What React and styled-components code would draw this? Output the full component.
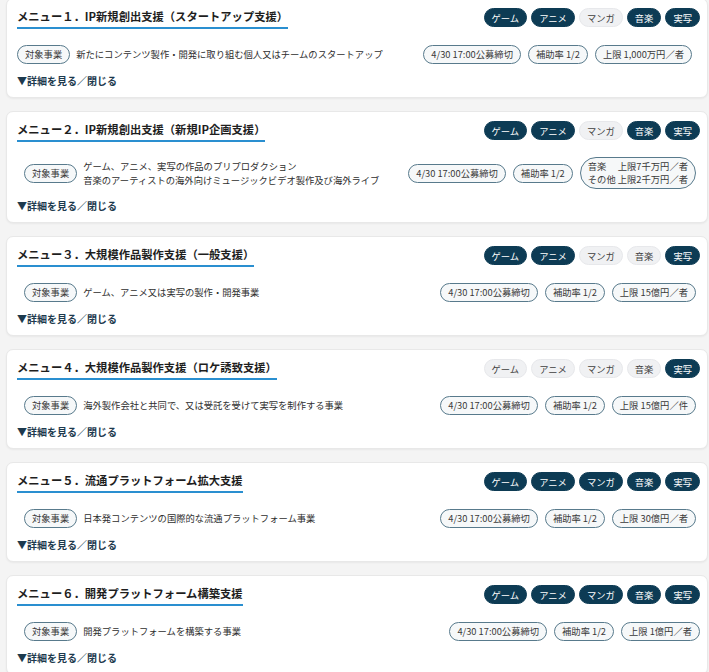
import React from "react";
import styled, { createGlobalStyle } from "styled-components";

const GlobalStyle = createGlobalStyle`
  body {
    margin: 0;
    background: #f4f4f4;
    font-family: "Noto Sans CJK JP", "Noto Sans", sans-serif;
    color: #333;
  }
`;

const GENRES = ["ゲーム", "アニメ", "マンガ", "音楽", "実写"];

const menus = [
  {
    title: "メニュー１．IP新規創出支援（スタートアップ支援）",
    genres: [1, 1, 0, 1, 1],
    desc: ["新たにコンテンツ製作・開発に取り組む個人又はチームのスタートアップ"],
    limit: ["上限 1,000万円／者"],
    indent: 0,
    trail: 8,
  },
  {
    title: "メニュー２．IP新規創出支援（新規IP企画支援）",
    genres: [1, 1, 0, 1, 1],
    desc: [
      "ゲーム、アニメ、実写の作品のプリプロダクション",
      "音楽のアーティストの海外向けミュージックビデオ製作及び海外ライブ",
    ],
    limit: ["音楽　 上限7千万円／者", "その他 上限2千万円／者"],
    indent: 7,
    trail: 4,
  },
  {
    title: "メニュー３．大規模作品製作支援（一般支援）",
    genres: [1, 1, 0, 0, 1],
    desc: ["ゲーム、アニメ又は実写の製作・開発事業"],
    limit: ["上限 15億円／者"],
    indent: 7,
    trail: 4,
  },
  {
    title: "メニュー４．大規模作品製作支援（ロケ誘致支援）",
    genres: [0, 0, 0, 0, 1],
    desc: ["海外製作会社と共同で、又は受託を受けて実写を制作する事業"],
    limit: ["上限 15億円／件"],
    indent: 7,
    trail: 4,
  },
  {
    title: "メニュー５．流通プラットフォーム拡大支援",
    genres: [1, 1, 1, 1, 1],
    desc: ["日本発コンテンツの国際的な流通プラットフォーム事業"],
    limit: ["上限 30億円／者"],
    indent: 7,
    trail: 4,
  },
  {
    title: "メニュー６．開発プラットフォーム構築支援",
    genres: [1, 1, 1, 1, 1],
    desc: ["開発プラットフォームを構築する事業"],
    limit: ["上限 1億円／者"],
    indent: 7,
    trail: 0,
  },
];

const App = () => {
  return (
    <>
      <GlobalStyle />
      <ListStyle>
        {menus.map((m) => (
          <CardStyle key={m.title}>
            <HeaderStyle>
              <TitleStyle>{m.title}</TitleStyle>
              <TagsStyle>
                {GENRES.map((g, i) => (
                  <Tag key={g} $active={!!m.genres[i]}>
                    {g}
                  </Tag>
                ))}
              </TagsStyle>
            </HeaderStyle>

            <RowStyle $indent={m.indent} $trail={m.trail}>
              <LeadStyle>
                <Pill>対象事業</Pill>
                <DescStyle>
                  {m.desc.map((d) => (
                    <div key={d}>{d}</div>
                  ))}
                </DescStyle>
              </LeadStyle>
              <InfoStyle>
                <Pill>4/30 17:00公募締切</Pill>
                <Pill>補助率 1/2</Pill>
                <Pill $multi={m.limit.length > 1}>
                  {m.limit.map((l) => (
                    <div key={l}>{l}</div>
                  ))}
                </Pill>
              </InfoStyle>
            </RowStyle>

            <ToggleStyle>▼詳細を見る／閉じる</ToggleStyle>
          </CardStyle>
        ))}
      </ListStyle>
    </>
  );
};

const ListStyle = styled.main`
  display: flex;
  flex-direction: column;
  gap: 13px;
  margin-top: -2px;
  padding: 0 1px 0 6px;
`;

const CardStyle = styled.section`
  background: #fff;
  border: 1px solid #e8e8e8;
  border-radius: 7px;
  box-shadow: 0 1px 2px rgba(0, 0, 0, 0.05);
  padding: 7px 7px 8px 10px;
`;

const HeaderStyle = styled.div`
  display: flex;
  align-items: center;
  justify-content: space-between;
`;

const TitleStyle = styled.h3`
  margin: 0;
  font-size: 11.3px;
  font-weight: 700;
  line-height: 20px;
  color: #1e1e1e;
  padding-bottom: 1px;
  border-bottom: 2px solid #2a8fd0;
  white-space: nowrap;
`;

const TagsStyle = styled.div`
  display: flex;
  gap: 4px;
`;

const Tag = styled.span`
  display: inline-flex;
  align-items: center;
  height: 19px;
  padding: 0 7px;
  border-radius: 10px;
  font-size: 9.3px;
  white-space: nowrap;
  box-sizing: border-box;
  background: ${(p) => (p.$active ? "#0d3b54" : "#f0f1f3")};
  border: 1px solid ${(p) => (p.$active ? "#0d3b54" : "#e7e8eb")};
  color: ${(p) => (p.$active ? "#fff" : "#3f3f3f")};
`;

const RowStyle = styled.div`
  display: flex;
  align-items: center;
  margin-top: 15px;
  min-height: 20px;
  padding: 0 ${(p) => p.$trail}px 0 ${(p) => p.$indent}px;
`;

const LeadStyle = styled.div`
  display: flex;
  align-items: center;
  gap: 6px;
`;

const DescStyle = styled.div`
  font-size: 9.3px;
  line-height: 14px;
  color: #2e2e2e;
  white-space: nowrap;
`;

const InfoStyle = styled.div`
  margin-left: auto;
  display: flex;
  align-items: center;
  gap: 7px;
`;

const Pill = styled.span`
  display: inline-flex;
  flex-direction: column;
  justify-content: center;
  box-sizing: border-box;
  min-height: 19px;
  padding: ${(p) => (p.$multi ? "2px 7px" : "0 7px")};
  border: 1px solid #587a8c;
  border-radius: ${(p) => (p.$multi ? "16px" : "10px")};
  background: #f6f8f9;
  font-size: 9.3px;
  line-height: 13px;
  color: #3a3a3a;
  white-space: pre;
`;

const ToggleStyle = styled.div`
  margin-top: 9px;
  font-size: 10px;
  font-weight: 700;
  line-height: 16px;
  color: #1d3a4e;
`;

export default App;
